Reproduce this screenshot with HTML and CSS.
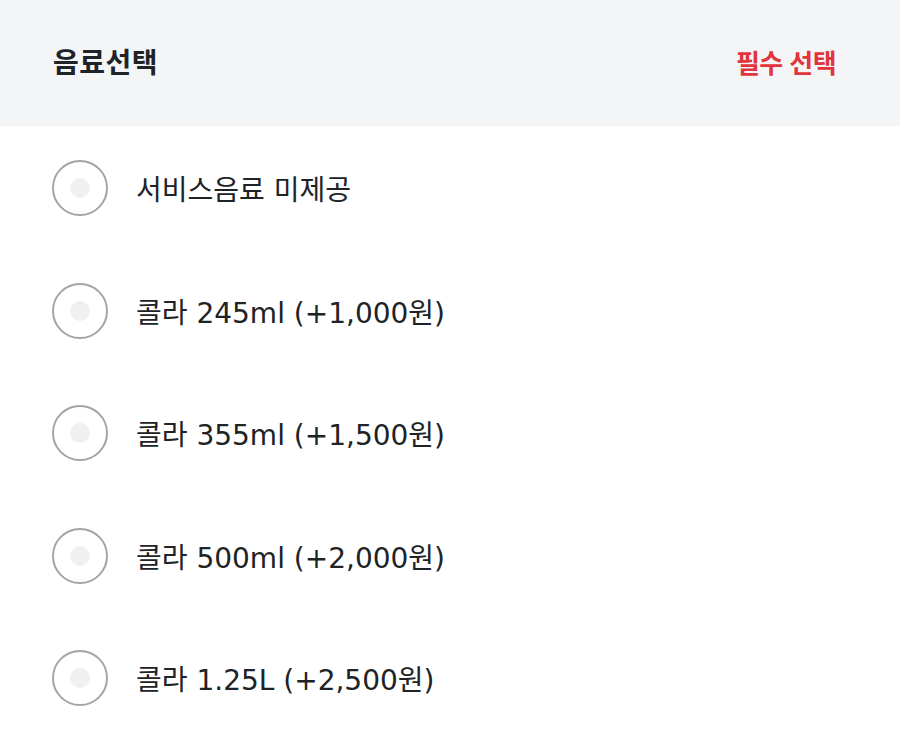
FILE: index.html
```html
<!DOCTYPE html>
<html lang="ko">
<head>
<meta charset="utf-8">
<title>음료선택</title>
<link rel="stylesheet" href="styles.css">
</head>
<body>
<section class="option-group">
  <header class="group-head">
    <h2 class="group-title">음료선택</h2>
    <span class="group-badge">필수 선택</span>
  </header>
  <ul class="choice-list">
    <li class="choice"><span class="radio"></span><span class="label">서비스음료 미제공</span></li>
    <li class="choice"><span class="radio"></span><span class="label">콜라 245ml (+1,000원)</span></li>
    <li class="choice"><span class="radio"></span><span class="label">콜라 355ml (+1,500원)</span></li>
    <li class="choice"><span class="radio"></span><span class="label">콜라 500ml (+2,000원)</span></li>
    <li class="choice"><span class="radio"></span><span class="label">콜라 1.25L (+2,500원)</span></li>
  </ul>
</section>
</body>
</html>
```

FILE: styles.css
```css
* { box-sizing: border-box; }

html, body {
  margin: 0;
  padding: 0;
  background: #ffffff;
  font-family: "Noto Sans CJK KR", "Noto Sans", sans-serif;
}

.option-group {
  width: 900px;
}

.group-head {
  height: 126px;
  background: #f4f5f7;
  display: flex;
  align-items: center;
  justify-content: space-between;
  padding: 0 64px 4px 53px;
}

.group-title {
  margin: 0;
  font-size: 28px;
  font-weight: 700;
  color: #1e2328;
  letter-spacing: 0.5px;
}

.group-badge {
  font-size: 26px;
  font-weight: 700;
  color: #e2343b;
  letter-spacing: -0.6px;
}

.choice-list {
  list-style: none;
  margin: 0;
  padding: 34px 0 0 52px;
  display: flex;
  flex-direction: column;
  gap: 66.5px;
}

.choice {
  display: flex;
  align-items: center;
  height: 56px;
  gap: 28px;
}

.radio {
  width: 56px;
  height: 56px;
  flex: none;
  border-radius: 50%;
  border: 2px solid #a0a6a9;
  display: flex;
  align-items: center;
  justify-content: center;
}

.radio::after {
  content: "";
  width: 20px;
  height: 20px;
  border-radius: 50%;
  background: #eef0f1;
}

/* Latin digits come from DejaVu Sans (wider), Hangul falls through to Noto CJK */
.label {
  font-family: "DejaVu Sans", "Noto Sans CJK KR", sans-serif;
  font-size: 28px;
  color: #202326;
  letter-spacing: 0;
}
```
